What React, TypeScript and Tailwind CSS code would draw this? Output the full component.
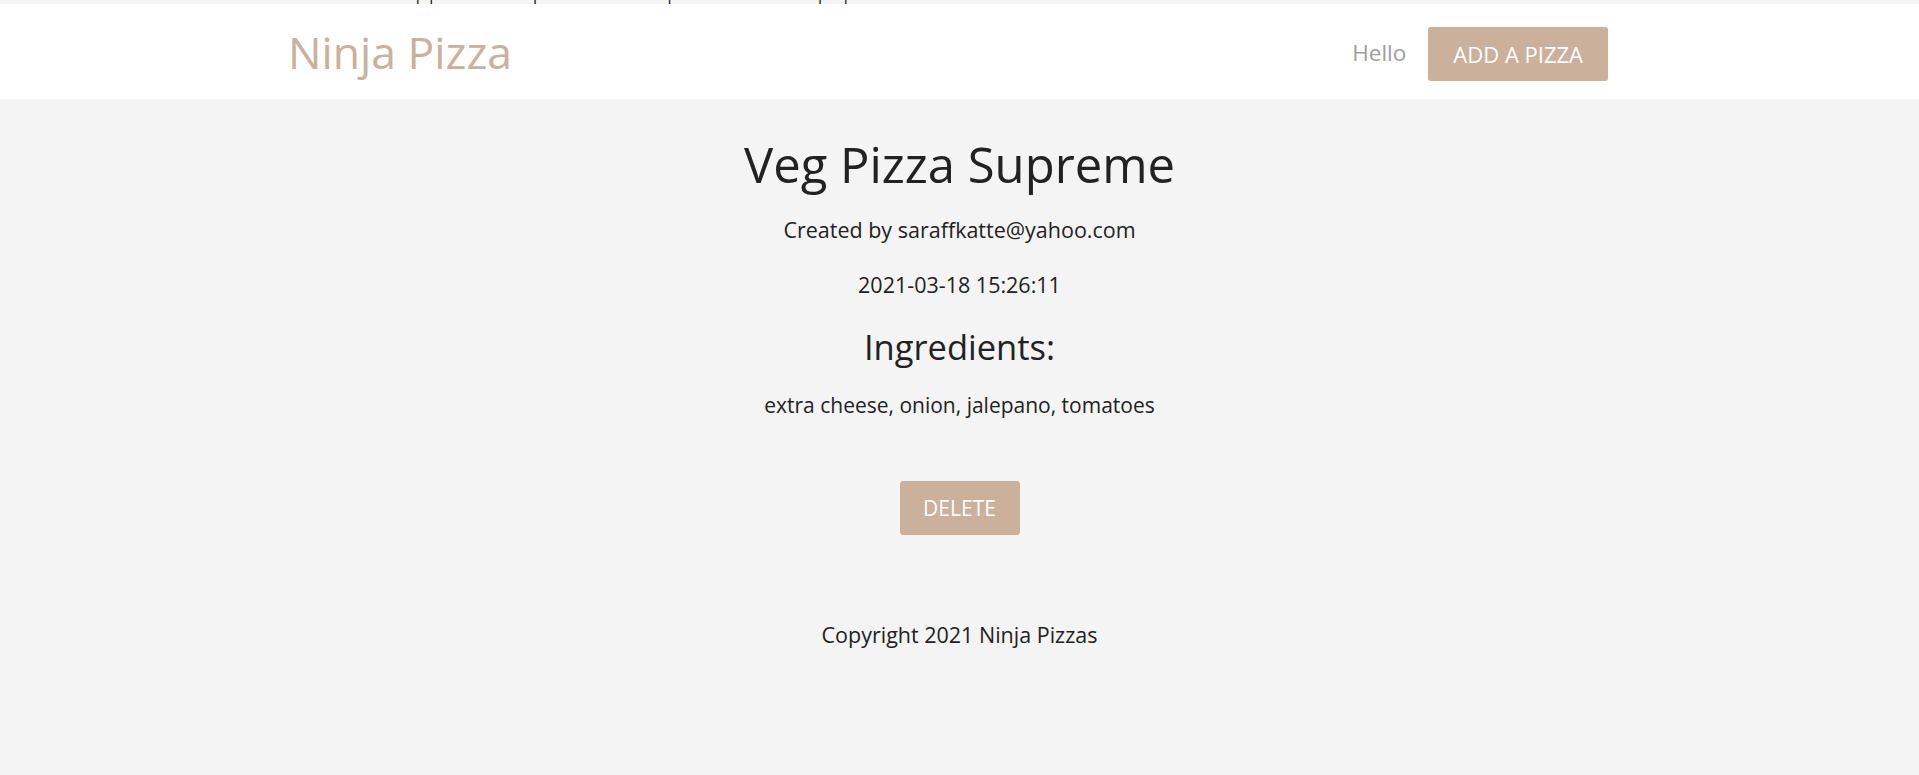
const pizza = {
  title: "Veg Pizza Supreme",
  email: "saraffkatte@yahoo.com",
  createdAt: "2021-03-18 15:26:11",
  ingredients: "extra cheese, onion, jalepano, tomatoes",
};

// descender marks left over from a line scrolled off the top
const cutMarks = [416, 5, 95, 126, 142, 17];

export default function App() {
  return (
    <div
      className="min-h-[775px] bg-[#f4f4f4] text-[#222222]"
      style={{ fontFamily: '"Open Sans", "Noto Sans", sans-serif' }}
    >
      <div className="flex h-[4px] overflow-hidden">
        {cutMarks.map((gap, i) => (
          <span key={i} className="-mt-[15px] text-[14px] leading-[20px] text-black" style={{ marginLeft: gap }}>
            p
          </span>
        ))}
      </div>

      <nav className="flex h-[95px] items-start justify-between bg-white pl-[288px] pr-[311px]">
        <a href="#" className="mt-[24px] text-[44.5px] leading-[48px] text-[#cbb09c]">
          Ninja Pizza
        </a>
        <ul className="flex items-start">
          <li className="mt-[34px] text-[22.5px] leading-[30px] text-[#9e9e9e]">Hello</li>
          <li className="ml-[22px] mt-[23px]">
            <a
              href="#"
              className="block h-[54px] rounded-[3px] bg-[#cbb09c] px-[25px] text-[22px] uppercase leading-[54px] text-white"
            >
              Add a Pizza
            </a>
          </li>
        </ul>
      </nav>

      <main className="flex flex-col items-center text-center">
        <h4 className="mt-[35px] text-[49px] leading-[60px]">{pizza.title}</h4>
        <p className="mt-[21px] text-[21.5px] leading-[30px]">Created by {pizza.email}</p>
        <p className="mt-[25px] text-[21.5px] leading-[30px]">{pizza.createdAt}</p>
        <h5 className="mt-[25px] text-[34.5px] leading-[44px]">Ingredients:</h5>
        <p className="mt-[21px] text-[21px] leading-[30px]">{pizza.ingredients}</p>
        <button className="mt-[61px] h-[54px] w-[120px] rounded-[3px] bg-[#cbb09c] text-[21px] uppercase leading-[54px] text-white">
          Delete
        </button>
      </main>

      <footer className="mt-[85px] text-center text-[21.5px] leading-[30px]">Copyright 2021 Ninja Pizzas</footer>
    </div>
  );
}
